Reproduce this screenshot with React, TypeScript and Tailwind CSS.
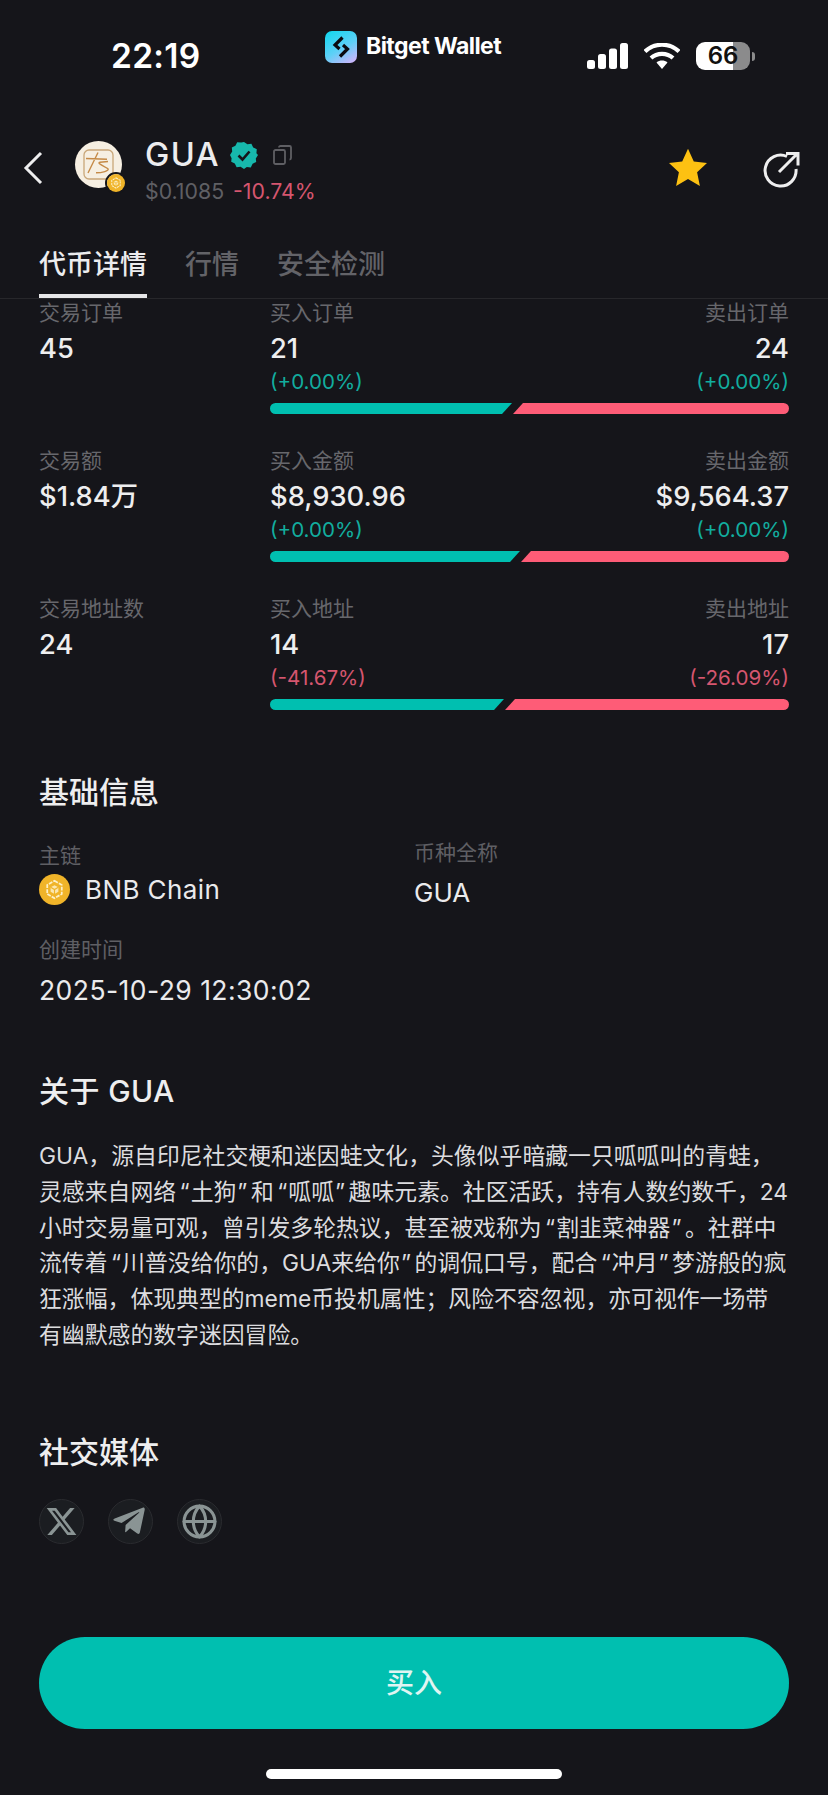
import React from "react";
import { FaXTwitter } from "react-icons/fa6";
import { FaTelegramPlane } from "react-icons/fa";
import { Globe } from "lucide-react";

const stats = [
  { label: "交易订单", total: "45", buyL: "买入订单", buy: "21", buyP: "(+0.00%)", sellL: "卖出订单", sell: "24", sellP: "(+0.00%)", w: 242, bad: false },
  { label: "交易额", total: "$1.84万", buyL: "买入金额", buy: "$8,930.96", buyP: "(+0.00%)", sellL: "卖出金额", sell: "$9,564.37", sellP: "(+0.00%)", w: 250, bad: false },
  { label: "交易地址数", total: "24", buyL: "买入地址", buy: "14", buyP: "(-41.67%)", sellL: "卖出地址", sell: "17", sellP: "(-26.09%)", w: 234, bad: true },
];

function BnbCoin({ size }: { size: number }) {
  return (
    <svg width={size} height={size} viewBox="0 0 32 32" className="shrink-0">
      <circle cx="16" cy="16" r="16" fill="#f0b429" />
      <path d="M16 7l7.5 4.3v9.4L16 25l-7.5-4.3v-9.4z" fill="none" stroke="#fdf0c8" strokeWidth="1.8" strokeDasharray="4 1.2" />
      <path d="M16 11.5l4 2.3v4.6l-4 2.3-4-2.3v-4.6z" fill="#fdf0c8" opacity="0.85" />
      <path d="M12 13.8l4 2.3 4-2.3M16 16.1v4.5" fill="none" stroke="#f0b429" strokeWidth="1.2" />
    </svg>
  );
}

function Open() {
  return <span className="ml-[3.5px] mr-[1px]">“</span>;
}
function Close() {
  return <span className="ml-[1px] mr-[3.5px]">”</span>;
}

function Row({ s }: { s: (typeof stats)[number] }) {
  const pct = s.bad ? "text-[#d5566f]" : "text-[#12ad9f]";
  return (
    <div className="flex mb-[33px]">
      <div className="w-[231px] shrink-0">
        <div className="text-[21px] leading-[27px] text-[#67676c]">{s.label}</div>
        <div className="mt-[9px] text-[27.3px] leading-[28px] font-medium text-[#eeeeef]">{s.total}</div>
      </div>
      <div className="flex-1">
        <div className="flex justify-between text-[21px] leading-[27px] text-[#67676c]">
          <span>{s.buyL}</span>
          <span>{s.sellL}</span>
        </div>
        <div className="mt-[9px] flex justify-between text-[27.3px] leading-[28px] font-medium text-[#eeeeef]">
          <span>{s.buy}</span>
          <span>{s.sell}</span>
        </div>
        <div className={`mt-[5px] flex justify-between text-[20.6px] leading-[28px] ${pct}`}>
          <span>{s.buyP}</span>
          <span>{s.sellP}</span>
        </div>
        <div className="mt-[7px] flex gap-px h-[11px]">
          <div
            className="h-full bg-[#00bfb0] rounded-l-full [clip-path:polygon(0_0,100%_0,calc(100%-10px)_100%,0_100%)]"
            style={{ width: s.w }}
          />
          <div className="h-full flex-1 bg-[#fe5c77] rounded-r-full [clip-path:polygon(10px_0,100%_0,100%_100%,0_100%)]" />
        </div>
      </div>
    </div>
  );
}

export default function App() {
  return (
    <div className="w-[828px] h-[1795px] overflow-hidden flex flex-col bg-[#15151a] text-[#eeeeef] font-['Inter','Noto_Sans_CJK_SC',sans-serif]">
      {/* status bar */}
      <div className="h-[130px] shrink-0 relative flex items-start justify-between pl-[111px] pr-[73px] pt-[36px]">
        <div className="text-[33.5px] leading-[40px] font-semibold text-white tracking-[0.3px]">22:19</div>
        <div className="absolute left-[325px] top-[31px] flex items-center gap-[9px]">
          <svg width="32" height="32" viewBox="0 0 32 32">
            <defs>
              <linearGradient id="bg" x1="0.2" y1="0" x2="0.8" y2="1">
                <stop offset="0" stopColor="#19d6f0" />
                <stop offset="0.55" stopColor="#5fd0f7" />
                <stop offset="1" stopColor="#c8b6fb" />
              </linearGradient>
            </defs>
            <rect width="32" height="32" rx="7" fill="url(#bg)" />
            <path d="M17.5 6.5L10 14l4.5 4M15 25.5l7.5-7.5-4.5-4" fill="none" stroke="#0b0b10" strokeWidth="3.2" />
          </svg>
          <span className="text-[23px] leading-[30px] font-bold text-white tracking-[-0.55px] -mt-[2px]">Bitget Wallet</span>
        </div>
        <div className="flex items-center mt-[6px]">
          <svg width="42" height="26" viewBox="0 0 42 26" fill="#fff">
            <rect x="0" y="17" width="8" height="9" rx="2.5" />
            <rect x="11" y="11" width="8" height="15" rx="2.5" />
            <rect x="22" y="5.5" width="8" height="20.5" rx="2.5" />
            <rect x="33" y="0" width="8" height="26" rx="2.5" />
          </svg>
          <svg width="36" height="26" viewBox="0 0 36 26" className="ml-[15px]">
            <path d="M1 8.5C10.5-.5 25.5-.5 35 8.5" fill="none" stroke="#fff" strokeWidth="4.2" />
            <path d="M7 15c6-5.5 16-5.5 22 0" fill="none" stroke="#fff" strokeWidth="4.2" />
            <path d="M12.5 19.5c3.2-2.6 7.8-2.6 11 0L18 26z" fill="#fff" />
          </svg>
          <div className="ml-[16px] w-[54px] h-[28px] rounded-[9px] bg-[linear-gradient(90deg,#ffffff_37px,#8b8b8c_37px)] text-center text-[24px] leading-[28px] font-semibold text-[#111]">
            66
          </div>
          <div className="ml-[2px] w-[3px] h-[9px] rounded-r-full bg-[#8b8b8c]" />
        </div>
      </div>

      {/* header */}
      <div className="h-[70px] shrink-0 flex items-center pl-[23px] pr-[28px]">
        <svg width="20" height="34" viewBox="0 0 20 34" fill="none" className="mt-[6px]">
          <path d="M18 2L3 17l15 15" stroke="#eeeeef" strokeWidth="3" />
        </svg>
        <div className="relative ml-[32px] mb-[2px] w-[47px] h-[47px] rounded-full bg-[#f6efe2] flex items-center justify-center">
          <svg width="31" height="31" viewBox="0 0 31 31" fill="none">
            <rect x="1" y="1" width="29" height="29" rx="5" stroke="#c9a779" strokeWidth="1.3" />
            <path d="M15 3.5L5 24M3 9.5l21 .8M25 12.5l-8 .8c-4 1 5 4 8 6.5 1.5 2-6 4-12 4" stroke="#c58a47" strokeWidth="1.4" />
          </svg>
          <div className="absolute -right-[5px] -bottom-[6px] rounded-full border-2 border-[#15151a]">
            <BnbCoin size={18} />
          </div>
        </div>
        <div className="ml-[23px] flex flex-col self-start mt-[9px]">
          <div className="flex items-center h-[32px]">
            <span className="text-[32.5px] leading-[32px] font-medium text-[#ececee] tracking-[1.4px]">GUA</span>
            <svg width="28" height="28" viewBox="0 0 28 28" className="ml-[10px]">
              <path d="M14 1l3.4 2.2 4-.4 1.8 3.6 3.6 1.8-.4 4L28 14l-2.2 3.4.4 3.6-3.6 1.8-1.8 3.6-4-.4L14 28l-3.4-2.2-4 .4-1.8-3.6-3.6-1.8.4-3.6L0 14l2.2-3.4-.4-4 3.6-1.8 1.8-3.6 4 .4z" fill="#17b8ac" />
              <path d="M8.5 14.5l4 4 7-8" fill="none" stroke="#15151a" strokeWidth="2.6" />
            </svg>
            <svg width="19" height="20" viewBox="0 0 19 20" fill="none" className="ml-[15px]">
              <rect x="1" y="5" width="11" height="14" rx="1.5" stroke="#5f5f64" strokeWidth="1.8" />
              <path d="M6 2.5C6 1.7 6.7 1 7.5 1h9c.8 0 1.5.7 1.5 1.5V13c0 .8-.7 1.5-1.5 1.5" stroke="#5f5f64" strokeWidth="1.8" />
            </svg>
          </div>
          <div className="mt-[8px] flex text-[21.3px] leading-[24px] gap-[9px]">
            <span className="text-[#5f5f64]">$0.1085</span>
            <span className="text-[#d5566f]">-10.74%</span>
          </div>
        </div>
        <div className="ml-auto flex items-center gap-[55px]">
          <svg width="40" height="38" viewBox="0 0 24 23" className="mt-[4px]">
            <path d="M12 0.5l3.5 7.7 8 .9-6 5.6 1.7 8.3-7.2-4.2-7.2 4.2 1.7-8.3-6-5.6 8-.9z" fill="#fdc112" />
          </svg>
          <svg width="37" height="37" viewBox="0 0 37 37" fill="none" className="mt-[8px]">
            <path d="M24 5.5A15.5 15.5 0 1 0 33 18" stroke="#eeeeef" strokeWidth="3" />
            <path d="M16 21L34 3M23 2.5h12v12" stroke="#eeeeef" strokeWidth="3" />
          </svg>
        </div>
      </div>

      {/* tabs */}
      <div className="shrink-0 flex gap-[38px] pl-[39px] h-[99px] border-b border-[#27272b] pt-[45px]">
        <div className="relative text-[27px] leading-[40px] font-medium text-[#ececee]">
          代币详情
          <div className="absolute left-0 right-0 top-[49px] h-[4px] bg-[#e6e6e8]" />
        </div>
        <div className="text-[27px] leading-[40px] font-medium text-[#636368]">行情</div>
        <div className="text-[27px] leading-[40px] font-medium text-[#636368]">安全检测</div>
      </div>

      {/* content */}
      <div className="flex-1 min-h-0 px-[39px] flex flex-col">
        {stats.map((s) => (
          <Row key={s.label} s={s} />
        ))}

        <h2 className="mt-[31px] text-[30px] leading-[36px] font-medium text-[#eeeeef]">基础信息</h2>

        <div className="mt-[29px] flex">
          <div className="w-[375px] shrink-0">
            <div className="text-[21px] leading-[28px] text-[#5f5f64] mt-[3px]">主链</div>
            <div className="mt-[4px] flex items-center gap-[15px] h-[31px]">
              <BnbCoin size={31} />
              <span className="text-[26px] text-[#eaeaec] tracking-[0.4px]">BNB Chain</span>
            </div>
          </div>
          <div>
            <div className="text-[21px] leading-[28px] text-[#5f5f64]">币种全称</div>
            <div className="mt-[12px] text-[26px] leading-[28px] text-[#eaeaec]">GUA</div>
          </div>
        </div>

        <div className="mt-[29px] text-[21px] leading-[28px] text-[#5f5f64]">创建时间</div>
        <div className="mt-[12px] text-[26.5px] leading-[28px] text-[#eaeaec] tracking-[0.45px]">2025-10-29 12:30:02</div>

        <h2 className="mt-[69px] text-[30px] leading-[36px] font-medium text-[#eeeeef] tracking-[0.4px]">关于 GUA</h2>

        <p className="mt-[30px] text-[22.85px] leading-[35.8px] text-[#dcdcdf] whitespace-nowrap">
          GUA，源自印尼社交梗和迷因蛙文化，头像似乎暗藏一只呱呱叫的青蛙，
          <br />
          灵感来自网络<Open />土狗<Close />和<Open />呱呱<Close />趣味元素。社区活跃，持有人数约数千，24
          <br />
          小时交易量可观，曾引发多轮热议，甚至被戏称为<Open />割韭菜神器<Close />。社群中
          <br />
          流传着<Open />川普没给你的，GUA来给你<Close />的调侃口号，配合<Open />冲月<Close />梦游般的疯
          <br />
          狂涨幅，体现典型的meme币投机属性；风险不容忽视，亦可视作一场带
          <br />
          有幽默感的数字迷因冒险。
        </p>

        <h2 className="mt-[80px] text-[30px] leading-[36px] font-medium text-[#eeeeef]">社交媒体</h2>

        <div className="mt-[29px] flex gap-[24px]">
          <div className="w-[45px] h-[45px] rounded-full bg-[#1b1d21] border border-[#2a2b2f] flex items-center justify-center">
            <FaXTwitter size={33} color="#8a9494" />
          </div>
          <div className="w-[45px] h-[45px] rounded-full bg-[#1b1d21] border border-[#2a2b2f] flex items-center justify-center">
            <FaTelegramPlane size={36} color="#8a9494" className="-ml-[3px]" />
          </div>
          <div className="w-[45px] h-[45px] rounded-full bg-[#1b1d21] border border-[#2a2b2f] flex items-center justify-center">
            <Globe size={37} color="#8a9494" strokeWidth={2} />
          </div>
        </div>

        <button className="mt-[93px] h-[92px] shrink-0 rounded-full bg-[#00bfb0] text-[28px] font-medium text-[#e0f5f2]">买入</button>

        <div className="mt-[40px] mx-auto w-[296px] h-[10px] rounded-full bg-white shrink-0" />
      </div>
    </div>
  );
}
